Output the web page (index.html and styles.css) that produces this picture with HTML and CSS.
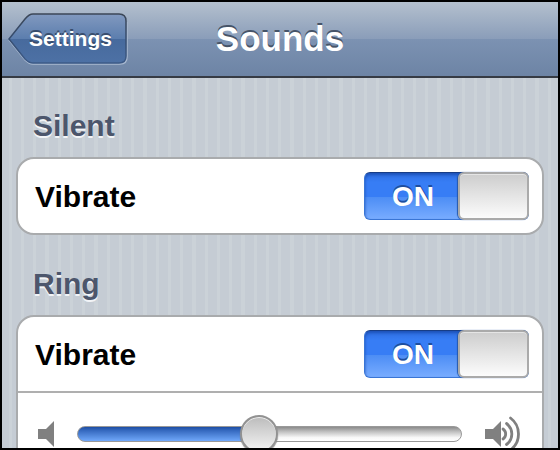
FILE: index.html
```html
<!DOCTYPE html>
<html lang="en">
<head>
<meta charset="utf-8">
<meta name="viewport" content="width=device-width, initial-scale=1">
<title>Sounds</title>
<link rel="stylesheet" href="styles.css">
</head>
<body>
<div class="screen">
  <header class="navbar">
    <button class="back" type="button">
      <svg class="back-shape" viewBox="0 0 120 52" aria-hidden="true">
        <defs>
          <linearGradient id="back-fill" x1="0" y1="0" x2="0" y2="1">
            <stop offset="0" stop-color="#8199bf"/>
            <stop offset="0.5" stop-color="#5c7eae"/>
            <stop offset="0.51" stop-color="#476a9d"/>
            <stop offset="1" stop-color="#4d71a5"/>
          </linearGradient>
          <linearGradient id="back-line" x1="0" y1="0" x2="0" y2="1">
            <stop offset="0" stop-color="#3b4656"/>
            <stop offset="0.5" stop-color="#364d70"/>
            <stop offset="1" stop-color="#3d5b88"/>
          </linearGradient>
        </defs>
        <path d="M1 27 17 47Q21 51 25 51H112Q119 51 119 44V9" fill="none" stroke="#a9b9d0" stroke-width="1.5"/>
        <path d="M1 26 17 6Q21 1 25 1H111Q118 1 118 8V43Q118 50 111 50H25Q21 50 17 46Z" fill="url(#back-fill)" stroke="url(#back-line)" stroke-width="1.5"/>
      </svg>
      <span class="back-text">Settings</span>
    </button>
    <h1 class="title">Sounds</h1>
  </header>

  <main class="content">
    <section>
      <h2 class="heading">Silent</h2>
      <div class="card">
        <div class="row">
          <label class="name" for="silent-vibrate">Vibrate</label>
          <span class="switch">
            <input class="switch-input" id="silent-vibrate" type="checkbox" role="switch" checked>
            <span class="switch-text" aria-hidden="true">ON</span>
            <span class="switch-knob"></span>
          </span>
        </div>
      </div>
    </section>

    <section>
      <h2 class="heading">Ring</h2>
      <div class="card">
        <div class="row">
          <label class="name" for="ring-vibrate">Vibrate</label>
          <span class="switch">
            <input class="switch-input" id="ring-vibrate" type="checkbox" role="switch" checked>
            <span class="switch-text" aria-hidden="true">ON</span>
            <span class="switch-knob"></span>
          </span>
        </div>
        <div class="row volume">
          <svg class="quiet" viewBox="0 0 17 28" aria-hidden="true">
            <path d="M0 9H8L16 1V27L8 19H0Z" fill="#808080"/>
          </svg>
          <input class="slider" type="range" min="0" max="100" value="47" aria-label="Ringer volume">
          <svg class="loud" viewBox="0 0 38 38" aria-hidden="true">
            <path d="M1 14H9L17 6V32L9 24H1Z" fill="#808080"/>
            <g fill="none" stroke="#808080" stroke-width="2.8" stroke-linecap="round">
              <path d="M19 14A6 6 0 0 1 19 24"/>
              <path d="M22.500 8.500A13 13 0 0 1 22.500 29.500"/>
              <path d="M26.500 3A20 20 0 0 1 26.500 35"/>
            </g>
          </svg>
        </div>
      </div>
    </section>
  </main>
</div>
</body>
</html>
```
FILE: styles.css
```css
* {
  box-sizing: border-box;
}

body {
  margin: 0;
  font-family: "Liberation Sans", Arial, sans-serif;
  font-weight: bold;
}

.screen {
  height: 100vh;
  overflow: hidden;
  border: 2px solid #000;
  background-color: #c5ccd4;
  background-image: linear-gradient(90deg,
    transparent 7px, #cbd2d8 7px, #cbd2d8 10px,
    transparent 10px, transparent 19px, #cbd2d8 19px, #cbd2d8 22px,
    transparent 22px, transparent 31px, #cbd2d8 31px, #cbd2d8 34px,
    transparent 34px, transparent 43px, #cbd2d8 43px, #cbd2d8 47px,
    transparent 47px);
  background-size: 49px 100%;
}

.navbar {
  display: grid;
  grid-template-columns: 1fr auto 1fr;
  align-items: center;
  height: 76px;
  padding: 0 6px;
  border-bottom: 2px solid #363b44;
  background: linear-gradient(#b4c0ce, #8a9db9 50%, #7c92b2 50%, #6d84a5);
}

.back {
  display: grid;
  justify-self: start;
  width: 120px;
  height: 52px;
  padding: 0;
  border: 0;
  background: none;
  color: #fff;
  font: inherit;
  font-size: 21px;
  line-height: 24px;
  text-shadow: 0 -2px 0 #384d6d;
}

.back-shape,
.back-text {
  grid-area: 1 / 1;
}

.back-text {
  align-self: center;
  padding-left: 5px;
}

.title {
  margin: 0;
  color: #fff;
  font-size: 35px;
  line-height: 40px;
  text-shadow: 0 -2px 0 #465468;
}

.content {
  padding: 31px 14px 0;
}

.heading {
  margin: 0;
  padding: 0 17px 14px;
  color: #4c566c;
  font-size: 30px;
  line-height: 34px;
  text-shadow: 0 2px 0 #f2f4f7;
}

.card {
  margin-bottom: 32px;
  border: 2px solid #a9abad;
  border-radius: 18px;
  background: #fff;
}

.row {
  display: flex;
  align-items: center;
  justify-content: space-between;
  height: 74px;
  padding: 0 13px 0 17px;
}

.name {
  padding-top: 2px;
  color: #000;
  font-size: 30px;
  line-height: 34px;
}

.switch {
  display: grid;
  grid-template-columns: 94px 71px;
  height: 48px;
  border-radius: 6px;
}

.switch-input {
  grid-area: 1 / 1 / 2 / 3;
  appearance: none;
  width: 100%;
  height: 100%;
  margin: 0;
  border: 1px solid #3975d5;
  border-top-color: #173d86;
  border-radius: 6px;
  background: linear-gradient(#2d6de0, #377df5 20%, #377df5 52%, #4c8df5 52%, #78acff);
  box-shadow: inset 0 2px 3px #1d52b8;
}

.switch-text {
  grid-area: 1 / 1;
  place-self: center;
  padding-top: 2px;
  padding-left: 4px;
  color: #fff;
  font-size: 28px;
  line-height: 32px;
  text-shadow: 0 -2px 0 #1e4e9f;
  pointer-events: none;
}

.switch-knob {
  grid-area: 1 / 2;
  border: 2px solid #aaa;
  border-radius: 6px;
  background: linear-gradient(#cdcdcd, #fcfcfc);
  box-shadow: -1px 0 1px #2458ac, inset 0 1px 0 #e5e5e5;
  pointer-events: none;
}

.volume {
  height: 84px;
  padding: 0 20px;
  border-top: 2px solid #afafaf;
}

.quiet {
  width: 17px;
  height: 28px;
}

.loud {
  width: 38px;
  height: 38px;
}

.slider {
  flex: 1;
  appearance: none;
  min-width: 0;
  height: 40px;
  margin: 0 22px;
  background: none;
}

.slider::-webkit-slider-runnable-track {
  height: 16px;
  border: 1px solid #999;
  border-radius: 8px;
  background:
    linear-gradient(#1d4da4, #3569bf 25%, #70a8fa) left / 47% 100% no-repeat,
    linear-gradient(#8b8b8b, #c2c2c2 35%, #f7f7f7 75%, #fff);
}

.slider::-webkit-slider-thumb {
  appearance: none;
  width: 38px;
  height: 38px;
  margin-top: -12px;
  border: 2px solid #929292;
  border-radius: 50%;
  background: linear-gradient(#bcbcbc, #f4f4f4);
  box-shadow: inset 0 1px 0 #eee, 0 1px 1px #777;
}
```
